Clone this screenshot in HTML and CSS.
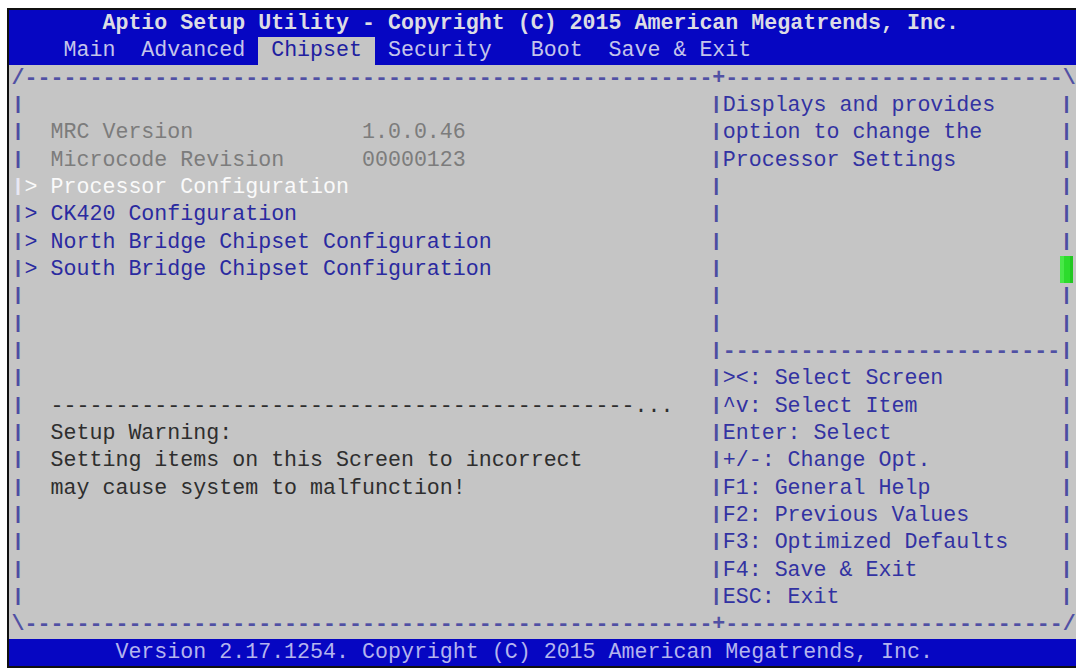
FILE: index.html
```html
<!DOCTYPE html>
<html lang="en">
<head>
	<meta charset="UTF-8">
	<title>Aptio Setup Utility</title>
	<link rel="stylesheet" href="styles.css">
</head>
<body>
	<div class="screen">
		<header class="title-bar">
			<div class="row title">Aptio Setup Utility - Copyright (C) 2015 American Megatrends, Inc.</div>
			<nav class="row tabs">    Main  Advanced <span class="tab-active"> Chipset </span> Security   Boot  Save &amp; Exit</nav>
		</header>

		<main class="frame">
			<div class="row rule">/-----------------------------------------------------+--------------------------\</div>

			<div class="panes">
				<!-- menu items -->
				<section class="pane-left">
					<div class="row"><span class="edge">|</span></div>
					<div class="row"><span class="edge">|</span><span class="info">  MRC Version             1.0.0.46</span></div>
					<div class="row"><span class="edge">|</span><span class="info">  Microcode Revision      00000123</span></div>
					<div class="row item-active"><span class="edge">|</span>&gt; Processor Configuration</div>
					<div class="row"><span class="edge">|</span><span class="item">&gt; CK420 Configuration</span></div>
					<div class="row"><span class="edge">|</span><span class="item">&gt; North Bridge Chipset Configuration</span></div>
					<div class="row"><span class="edge">|</span><span class="item">&gt; South Bridge Chipset Configuration</span></div>
					<div class="row"><span class="edge">|</span></div>
					<div class="row"><span class="edge">|</span></div>
					<div class="row"><span class="edge">|</span></div>
					<div class="row"><span class="edge">|</span></div>
					<div class="row"><span class="edge">|</span><span class="warn">  ---------------------------------------------...</span></div>
					<div class="row"><span class="edge">|</span><span class="warn">  Setup Warning:</span></div>
					<div class="row"><span class="edge">|</span><span class="warn">  Setting items on this Screen to incorrect</span></div>
					<div class="row"><span class="edge">|</span><span class="warn">  may cause system to malfunction!</span></div>
					<div class="row"><span class="edge">|</span></div>
					<div class="row"><span class="edge">|</span></div>
					<div class="row"><span class="edge">|</span></div>
					<div class="row"><span class="edge">|</span></div>
				</section>

				<!-- item help + key legend -->
				<aside class="pane-right">
					<div class="row"><span class="edge">|</span><span class="help">Displays and provides</span><span class="edge">|</span></div>
					<div class="row"><span class="edge">|</span><span class="help">option to change the</span><span class="edge">|</span></div>
					<div class="row"><span class="edge">|</span><span class="help">Processor Settings</span><span class="edge">|</span></div>
					<div class="row"><span class="edge">|</span><span class="help"></span><span class="edge">|</span></div>
					<div class="row"><span class="edge">|</span><span class="help"></span><span class="edge">|</span></div>
					<div class="row"><span class="edge">|</span><span class="help"></span><span class="edge">|</span></div>
					<div class="row"><span class="edge">|</span><span class="help"></span><span class="thumb"></span></div>
					<div class="row"><span class="edge">|</span><span class="help"></span><span class="edge">|</span></div>
					<div class="row"><span class="edge">|</span><span class="help"></span><span class="edge">|</span></div>
					<div class="row"><span class="edge">|</span><span class="help rule">--------------------------</span><span class="edge">|</span></div>
					<div class="row"><span class="edge">|</span><span class="help">&gt;&lt;: Select Screen</span><span class="edge">|</span></div>
					<div class="row"><span class="edge">|</span><span class="help">^v: Select Item</span><span class="edge">|</span></div>
					<div class="row"><span class="edge">|</span><span class="help">Enter: Select</span><span class="edge">|</span></div>
					<div class="row"><span class="edge">|</span><span class="help">+/-: Change Opt.</span><span class="edge">|</span></div>
					<div class="row"><span class="edge">|</span><span class="help">F1: General Help</span><span class="edge">|</span></div>
					<div class="row"><span class="edge">|</span><span class="help">F2: Previous Values</span><span class="edge">|</span></div>
					<div class="row"><span class="edge">|</span><span class="help">F3: Optimized Defaults</span><span class="edge">|</span></div>
					<div class="row"><span class="edge">|</span><span class="help">F4: Save &amp; Exit</span><span class="edge">|</span></div>
					<div class="row"><span class="edge">|</span><span class="help">ESC: Exit</span><span class="edge">|</span></div>
				</aside>
			</div>

			<div class="row rule">\-----------------------------------------------------+--------------------------/</div>
		</main>

		<footer class="row status">        Version 2.17.1254. Copyright (C) 2015 American Megatrends, Inc.</footer>
	</div>
</body>
</html>
```

FILE: styles.css
```css
html, body{
	margin: 0;
	background: #fff;
	overflow: hidden;
}
.screen{
	margin: 8px 0 0 7px;
	border: 2px solid #101010;
	border-right: 0;
	height: 656px;
	overflow: hidden;
	background: #c5c5c5;
	color: #2a2aa0;
	font-family: "Liberation Mono", "DejaVu Sans Mono", monospace;
	font-size: 21.63px;
	line-height: 27.33px;
}
.row{
	height: 27.33px;
	padding-left: 2.6px;
	white-space: pre;
}

/* top bar */
.title-bar{
	background: #0606c2;
}
.title{
	padding-left: calc(2.6px + 7ch);
	color: #dcdce4;
	font-weight: bold;
}
.tabs{
	color: #c4c4ea;
}
.tab-active{
	display: inline-block;
	height: 100%;
	background: #c5c5c5;
	color: #2020a0;
}

/* frame */
.rule{
	color: #5050a4;
	font-weight: bold;
}
.edge{
	display: inline-block;
	width: 1ch;
	color: #4c4ca2;
	font-weight: bold;
	transform: translateY(-1px) scaleY(.82);
}
.panes{
	display: grid;
	grid-template-columns: 54ch 28ch;
}
.pane-left .row,.pane-right .row{
	padding-left: 0;
}
.pane-left{
	padding-left: 2.6px;
}
.pane-right .row{
	display: flex;
}
.pane-right .help{
	width: 26ch;
	color: #3232a2;
}
.pane-right .rule{
	color: #5050a4;
}
/* scroll thumb sits on the right edge */
.thumb{
	width: 1ch;
	height: 100%;
	background: #2cdc2c;
	box-shadow: inset 4px 0 0 #48e848, inset -3px 0 0 #22c822;
}

/* left pane text */
.info{
	color: #7c7c7c;
}
.item{
	color: #2a2aa0;
}
.item-active{
	color: #fafafa;
}
.item-active .edge{
	color: #e8e8f4;
}
.warn{
	color: #2e2e2e;
}

/* bottom bar */
.status{
	background: #0606c2;
	color: #b4b4ee;
}
```
